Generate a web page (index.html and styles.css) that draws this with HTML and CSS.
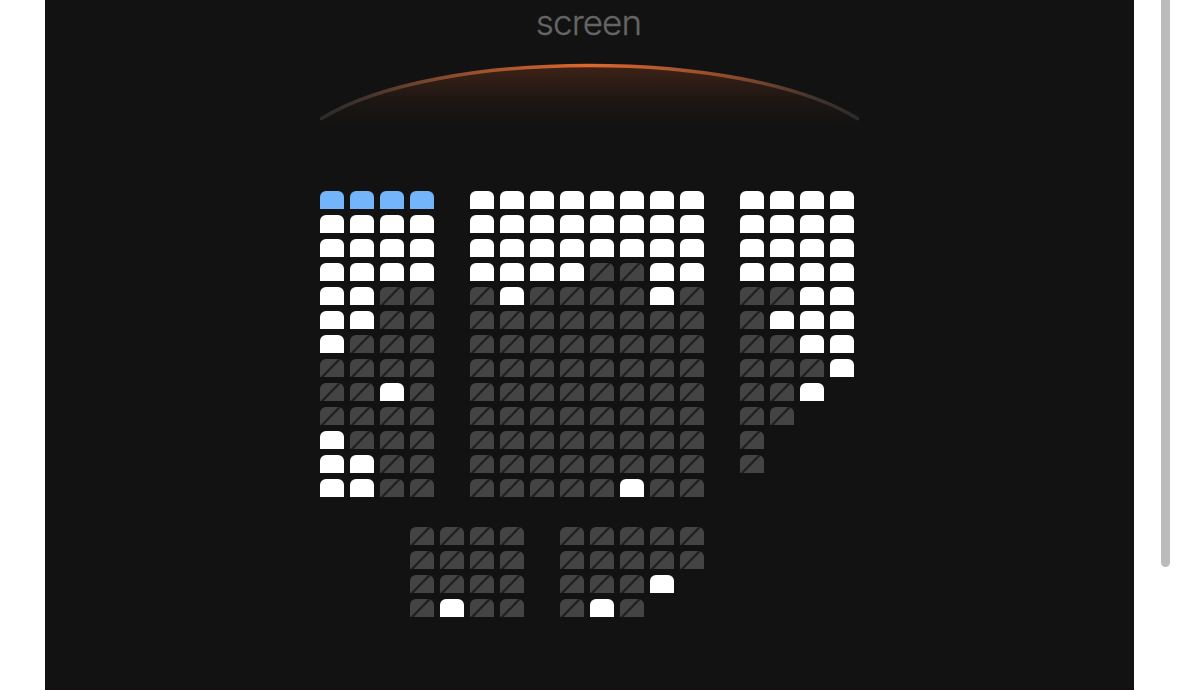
FILE: index.html
```html
<!DOCTYPE html>
<html lang="en">
<head>
<meta charset="utf-8">
<title>Seats</title>
<link rel="stylesheet" href="styles.css">
</head>
<body>
<main class="hall">
  <div class="label">screen</div>
  <svg class="arc" width="544" height="76" viewBox="0 0 544 76">
    <defs>
      <linearGradient id="glow" gradientUnits="userSpaceOnUse" x1="0" y1="9" x2="0" y2="72">
        <stop offset="0" stop-color="#f2672a" stop-opacity=".2"/>
        <stop offset=".25" stop-color="#f2672a" stop-opacity=".13"/>
        <stop offset=".6" stop-color="#f2672a" stop-opacity=".04"/>
        <stop offset="1" stop-color="#f2672a" stop-opacity="0"/>
      </linearGradient>
      <linearGradient id="edge" gradientUnits="userSpaceOnUse" x1="3" y1="0" x2="540" y2="0">
        <stop offset="0" stop-color="#2b2b2b"/>
        <stop offset=".08" stop-color="#40342f"/>
        <stop offset=".22" stop-color="#84492c"/>
        <stop offset=".5" stop-color="#de672f"/>
        <stop offset=".78" stop-color="#84492c"/>
        <stop offset=".92" stop-color="#40342f"/>
        <stop offset="1" stop-color="#2b2b2b"/>
      </linearGradient>
    </defs>
    <path d="M3.5 62.5C118 -8.2 425 -8.2 539.5 62.5V74H3.5Z" fill="url(#glow)"/>
    <path d="M3.5 62.5C118 -8.2 425 -8.2 539.5 62.5" fill="none" stroke="url(#edge)" stroke-width="3.4" stroke-linecap="round"/>
  </svg>
  <div class="seats" id="floor"></div>
  <div class="seats" id="balcony"></div>
</main>
<aside class="rail"><div class="thumb"></div></aside>
<script src="seats.js"></script>
</body>
</html>
```
FILE: styles.css
```css
* { box-sizing: border-box; }
body {
  margin: 0;
  height: 690px;
  display: flex;
  overflow: hidden;
  background: #fff;
  font-family: Inter, "Liberation Sans", sans-serif;
}
.hall {
  width: 1089px;
  height: 690px;
  margin-left: 45px;
  display: flex;
  flex-direction: column;
  align-items: center;
  background: #121212;
  border-bottom: 2px solid #150d10;
}
.label {
  height: 56px;
  margin-right: 2px;
  line-height: 44px;
  font-size: 35px;
  font-weight: 300;
  letter-spacing: -0.9px;
  color: #666;
  -webkit-text-stroke: 0.3px #606060;
}
.arc { display: block; flex: none; }
.seats {
  width: 540px;
  display: flex;
  flex-direction: column;
  gap: 6px;
}
#floor { margin-top: 59px; }
#balcony { margin-top: 30px; }
.row { display: flex; gap: 6px; }
.seat, .aisle { width: 24px; height: 18px; flex: none; }
.seat { border-radius: 6px 6px 0 0; background: #fff; }
.picked { background: #73b4fa; }
.taken { background: #444; overflow: hidden; }
.taken svg { display: block; }
.rail { width: 45px; padding-left: 27px; }
.thumb {
  width: 9px;
  height: 567px;
  border-radius: 0 0 5px 5px;
  background: #bbb;
}
```
FILE: seats.js
```js
// s = selected, o = free, x = taken, space = aisle
const plans = {
  floor: [
    "ssss oooooooo oooo",
    "oooo oooooooo oooo",
    "oooo oooooooo oooo",
    "oooo ooooxxoo oooo",
    "ooxx xoxxxxox xxoo",
    "ooxx xxxxxxxx xooo",
    "oxxx xxxxxxxx xxoo",
    "xxxx xxxxxxxx xxxo",
    "xxox xxxxxxxx xxo",
    "xxxx xxxxxxxx xx",
    "oxxx xxxxxxxx x",
    "ooxx xxxxxxxx x",
    "ooxx xxxxxoxx"
  ],
  balcony: [
    "   xxxx xxxxx",
    "   xxxx xxxxx",
    "   xxxx xxxo",
    "   xoxx xox"
  ]
};
const kinds = { s: "seat picked", o: "seat", x: "seat taken", " ": "aisle" };
const slash = '<svg width="24" height="18"><path d="M1.6 18.6L20.2 -0.6" stroke="#202020" stroke-width="2.2"/></svg>';
for (const [id, rows] of Object.entries(plans)) {
  document.getElementById(id).innerHTML = rows.map(row =>
    '<div class="row">' + [...row].map(c =>
      `<div class="${kinds[c]}">${c === "x" ? slash : ""}</div>`).join("") + "</div>"
  ).join("");
}
```
